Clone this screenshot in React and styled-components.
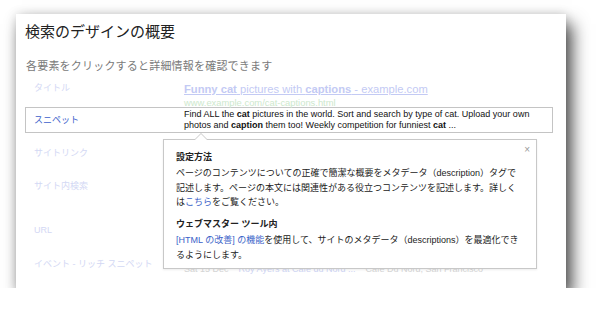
import styled, { createGlobalStyle } from 'styled-components';

const GlobalStyle = createGlobalStyle`
    html, body {
        margin: 0;
        padding: 0;
        background: #ffffff;
    }
    body {
        font-family: "Liberation Sans", "Noto Sans CJK JP", sans-serif;
        color: #222222;
    }
`;

const Card = styled.div`
    position: relative;
    box-sizing: border-box;
    width: 550px;
    height: 274px;
    margin: 14px 0 0 16px;
    padding: 9px 13px 0 9px;
    background: #ffffff;
    box-shadow: 6px 10px 16px rgba(0, 0, 0, 0.7), 0 0 10px rgba(0, 0, 0, 0.14);
`;

const Title = styled.h1`
    margin: 0;
    font-size: 15px;
    line-height: 18px;
    font-weight: normal;
    color: #222222;
`;

const Subtitle = styled.p`
    margin: 18px 0 5px 1px;
    font-size: 11px;
    line-height: 14px;
    letter-spacing: 0.2px;
    color: #7a7a7a;
`;

const Row = styled.div`
    display: grid;
    grid-template-columns: 158px 1fr;
    grid-template-rows: 100%;
    box-sizing: border-box;
    height: ${(p) => p.$h}px;
    border: 1px solid ${(p) => (p.$active ? '#c4c4c4' : 'transparent')};
    align-items: ${(p) => (p.$active ? 'center' : 'start')};
`;

const Label = styled.div`
    padding: ${(p) => (p.$active ? 0 : p.$top)}px 0 0 8px;
    font-size: 9px;
    line-height: 12px;
    color: ${(p) => (p.$active ? '#3d5fcb' : '#d3d8f4')};
`;

const Content = styled.div`
    padding-top: ${(p) => p.$top || 0}px;
    font-size: 9px;
    line-height: 11px;
    white-space: nowrap;
    color: #111111;
`;

const ResultLink = styled.div`
    font-size: 11.2px;
    line-height: 14px;
    color: #c3caf4;
    text-decoration: underline;
    b {
        font-weight: bold;
    }
`;

const ResultUrl = styled.div`
    font-size: 9.4px;
    line-height: 14px;
    color: #cde8cd;
`;

const Faded = styled.span`
    color: ${(p) => (p.$blue ? '#d0d6f4' : '#d6d6d6')};
    margin-right: 10px;
`;

const Popup = styled.div`
    position: absolute;
    left: 147px;
    top: 125px;
    box-sizing: border-box;
    width: 374px;
    height: 130px;
    padding: 10px 12px 0 12px;
    background: #ffffff;
    border: 1px solid #c8c8c8;
    box-shadow: 0 1px 2px rgba(0, 0, 0, 0.08);
    font-size: 9px;
    line-height: 14.3px;
    color: #222222;

    &::before,
    &::after {
        content: '';
        position: absolute;
        left: 30px;
        width: 0;
        height: 0;
        border-style: solid;
    }
    &::before {
        top: -7px;
        border-width: 0 7px 7px 7px;
        border-color: transparent transparent #c8c8c8 transparent;
    }
    &::after {
        top: -6px;
        left: 31px;
        border-width: 0 6px 6px 6px;
        border-color: transparent transparent #ffffff transparent;
    }
`;

const Close = styled.span`
    position: absolute;
    top: 3px;
    right: 6px;
    font-size: 10px;
    color: #9a9a9a;
`;

const Section = styled.div`
    margin-bottom: ${(p) => p.$gap || 0}px;
`;

const Heading = styled.div`
    font-weight: bold;
    margin-bottom: 2px;
`;

const Blue = styled.span`
    color: #3a62c8;
`;

const App = () => {
    return (
        <>
            <GlobalStyle />
            <Card>
                <Title>検索のデザインの概要</Title>
                <Subtitle>各要素をクリックすると詳細情報を確認できます</Subtitle>

                <Row $h={29}>
                    <Label $top={3}>タイトル</Label>
                    <Content $top={3}>
                        <ResultLink>
                            <b>Funny cat</b> pictures with <b>captions</b> - example.com
                        </ResultLink>
                        <ResultUrl>www.example.com/cat-captions.html</ResultUrl>
                    </Content>
                </Row>

                <Row $h={26} $active>
                    <Label $active>スニペット</Label>
                    <Content>
                        Find ALL the <b>cat</b> pictures in the world. Sort and search by type of cat. Upload your own
                        <br />
                        photos and <b>caption</b> them too! Weekly competition for funniest <b>cat</b> ...
                    </Content>
                </Row>

                <Row $h={33}>
                    <Label $top={13}>サイトリンク</Label>
                    <Content />
                </Row>
                <Row $h={44}>
                    <Label $top={13}>サイト内検索</Label>
                    <Content />
                </Row>
                <Row $h={34}>
                    <Label $top={13}>URL</Label>
                    <Content />
                </Row>
                <Row $h={37}>
                    <Label $top={13}>イベント - リッチ スニペット</Label>
                    <Content $top={19}>
                        <Faded>Sat 15 Dec</Faded>
                        <Faded $blue>Roy Ayers at Cafe du Nord ...</Faded>
                        <Faded>Cafe Du Nord, San Francisco</Faded>
                    </Content>
                </Row>

                <Popup>
                    <Close>×</Close>
                    <Section $gap={8}>
                        <Heading>設定方法</Heading>
                        ページのコンテンツについての正確で簡潔な概要をメタデータ（description）タグで
                        <br />
                        記述します。ページの本文には関連性がある役立つコンテンツを記述します。詳しく
                        <br />
                        は<Blue>こちら</Blue>をご覧ください。
                    </Section>
                    <Section>
                        <Heading>ウェブマスター ツール内</Heading>
                        <Blue>[HTML の改善] の機能</Blue>を使用して、サイトのメタデータ（descriptions）を最適化でき
                        <br />
                        るようにします。
                    </Section>
                </Popup>
            </Card>
        </>
    );
};

export default App;
